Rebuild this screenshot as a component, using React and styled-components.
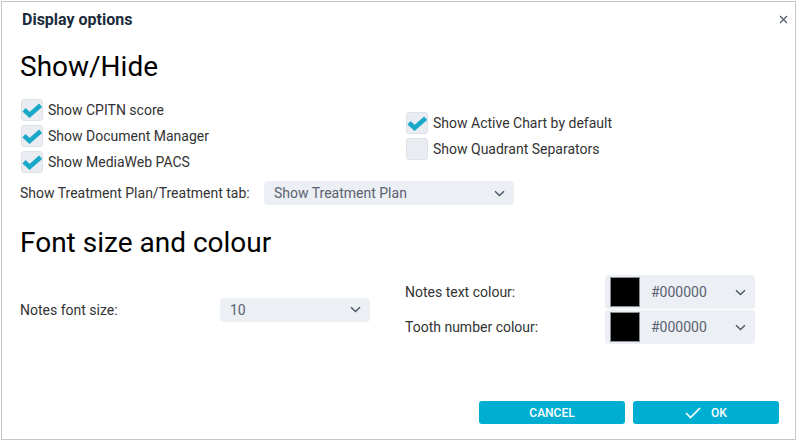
import styled, { createGlobalStyle } from 'styled-components';

const GlobalStyle = createGlobalStyle`
    html, body {
        margin: 0;
        padding: 0;
        background: #fff;
        font-family: Roboto, "Liberation Sans", sans-serif;
    }
    * { box-sizing: border-box; }
`;

const Chevron = () => (
    <svg width="11" height="7" viewBox="0 0 11 7" fill="none">
        <path d="M1 1.2 L5.5 5.5 L10 1.2" stroke="#4b5563" strokeWidth="1.4" />
    </svg>
);

const Tick = () => (
    <svg width="22" height="22" viewBox="0 0 22 22">
        <path d="M3 10.8 L8.6 16 L19.6 6.2" fill="none" stroke="#19a8c8" strokeWidth="4.6" />
    </svg>
);

const Check = ({ checked, label }) => (
    <CheckRow>
        <Box>{checked && <Tick />}</Box>
        <span>{label}</span>
    </CheckRow>
);

const Select = ({ value, width }) => (
    <SelectBox $width={width}>
        <span>{value}</span>
        <Chevron />
    </SelectBox>
);

const ColourSelect = ({ value }) => (
    <ColourBox>
        <Swatch />
        <span>{value}</span>
        <Chevron />
    </ColourBox>
);

const App = () => {
    return (
        <>
            <GlobalStyle />
            <Dialog>
                <Header>
                    <Title>Display options</Title>
                    <Close>
                        <svg width="9" height="9" viewBox="0 0 9 9">
                            <path d="M1 1 L8 8 M8 1 L1 8" stroke="#4b5563" strokeWidth="1.1" />
                        </svg>
                    </Close>
                </Header>
                <Body>
                    <Heading>Show/Hide</Heading>
                    <Columns>
                        <CheckGroup>
                            <Check checked label="Show CPITN score" />
                            <Check checked label="Show Document Manager" />
                            <Check checked label="Show MediaWeb PACS" />
                        </CheckGroup>
                        <CheckGroup>
                            <Check checked label="Show Active Chart by default" />
                            <Check label="Show Quadrant Separators" />
                        </CheckGroup>
                    </Columns>
                    <TabRow>
                        <Label $width={244}>Show Treatment Plan/Treatment tab:</Label>
                        <Select value="Show Treatment Plan" width={250} />
                    </TabRow>

                    <Heading $top={22}>Font size and colour</Heading>
                    <FontRow>
                        <Field>
                            <Label $width={200}>Notes font size:</Label>
                            <Select value="10" width={150} />
                        </Field>
                        <ColourList>
                            <Field>
                                <Label $width={200}>Notes text colour:</Label>
                                <ColourSelect value="#000000" />
                            </Field>
                            <Field>
                                <Label $width={200}>Tooth number colour:</Label>
                                <ColourSelect value="#000000" />
                            </Field>
                        </ColourList>
                    </FontRow>
                </Body>
                <Footer>
                    <Button>CANCEL</Button>
                    <Button>
                        <svg width="16" height="12" viewBox="0 0 16 12">
                            <path d="M1 6 L5.5 10.5 L15 1" fill="none" stroke="#fff" strokeWidth="1.6" />
                        </svg>
                        OK
                    </Button>
                </Footer>
            </Dialog>
        </>
    );
};

const Dialog = styled.div`
    margin: 1px 0 0 1px;
    width: 795px;
    height: 439px;
    border: 1px solid #c6c6c6;
    display: flex;
    flex-direction: column;
    background: #fff;
`;

const Header = styled.div`
    height: 34px;
    padding: 0 6px 0 20px;
    display: flex;
    align-items: center;
    justify-content: space-between;
`;

const Title = styled.div`
    font-size: 16px;
    font-weight: 700;
    color: #1c2c3c;
`;

const Close = styled.div`
    width: 12px;
    height: 12px;
    display: flex;
    align-items: center;
    justify-content: center;
`;

const Body = styled.div`
    padding: 0 18px;
    color: #333;
    font-size: 14px;
`;

const Heading = styled.h2`
    margin: ${p => p.$top || 15}px 0 16px 0;
    font-size: 28px;
    line-height: 32px;
    font-weight: 400;
    color: #000;
`;

const Columns = styled.div`
    display: grid;
    grid-template-columns: 385px 1fr;
    align-items: center;
`;

const CheckGroup = styled.div`
    display: flex;
    flex-direction: column;
    gap: 4px;
`;

const CheckRow = styled.div`
    display: flex;
    align-items: center;
    gap: 5px;
    height: 22px;
    padding-left: 1px;
`;

const Box = styled.div`
    width: 22px;
    height: 22px;
    border-radius: 3px;
    background: #e9edf2;
    border: 1px solid #dde2e8;
    position: relative;

    svg {
        position: absolute;
        left: -1px;
        top: -1px;
    }
`;

const TabRow = styled.div`
    display: flex;
    align-items: center;
    margin-top: 8px;
`;

const Label = styled.div`
    width: ${p => p.$width}px;
    flex-shrink: 0;
`;

const SelectBox = styled.div`
    width: ${p => p.$width}px;
    height: 24px;
    border-radius: 4px;
    background: #eceff3;
    display: flex;
    align-items: center;
    justify-content: space-between;
    padding: 0 9px 0 10px;
    color: #5a6272;
`;

const FontRow = styled.div`
    display: grid;
    grid-template-columns: 385px 1fr;
    align-items: center;
`;

const Field = styled.div`
    display: flex;
    align-items: center;
`;

const ColourList = styled.div`
    display: flex;
    flex-direction: column;
    gap: 1px;
`;

const ColourBox = styled.div`
    width: 150px;
    height: 34px;
    border-radius: 4px;
    background: #eceff3;
    display: flex;
    align-items: center;
    padding: 0 9px 0 5px;
    color: #5a6272;

    span {
        margin-left: 11px;
        flex: 1;
    }
`;

const Swatch = styled.div`
    width: 30px;
    height: 30px;
    background: #000;
    border: 1px solid #8a8f96;
`;

const Footer = styled.div`
    margin-top: auto;
    display: flex;
    justify-content: flex-end;
    gap: 8px;
    padding: 0 16px 15px 0;
`;

const Button = styled.button`
    width: 146px;
    height: 23px;
    border: 0;
    border-radius: 3px;
    background: #00aed1;
    color: #fff;
    font-family: Roboto, "Liberation Sans", sans-serif;
    font-size: 12px;
    font-weight: 500;
    display: flex;
    align-items: center;
    justify-content: center;
    gap: 10px;
    cursor: pointer;
`;

export default App;
